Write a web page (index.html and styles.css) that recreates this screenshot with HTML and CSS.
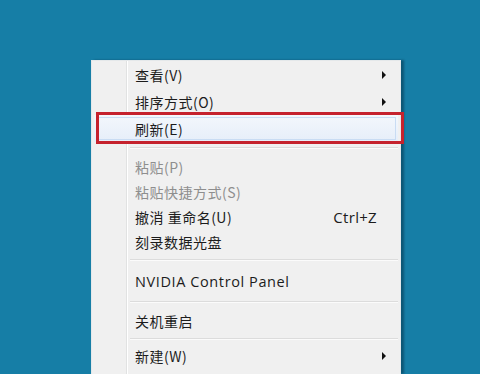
FILE: index.html
```html
<!DOCTYPE html>
<html lang="zh-CN">
<head>
<meta charset="utf-8">
<link rel="stylesheet" href="styles.css">
</head>
<body>
<div class="menu">
  <div class="item tall"><span class="label">查看(V)</span><span class="arrow"></span></div>
  <div class="item tall"><span class="label">排序方式(O)</span><span class="arrow"></span></div>
  <div class="item tall hot"><span class="label">刷新(E)</span><span class="mark"></span></div>
  <div class="sep"></div>
  <div class="item off"><span class="label">粘贴(P)</span></div>
  <div class="item off"><span class="label">粘贴快捷方式(S)</span></div>
  <div class="item"><span class="label">撤消 重命名(U)</span><span class="key">Ctrl+Z</span></div>
  <div class="item"><span class="label">刻录数据光盘</span></div>
  <div class="sep"></div>
  <div class="item wide"><span class="label latin">NVIDIA Control Panel</span></div>
  <div class="sep"></div>
  <div class="item mid"><span class="label">关机重启</span></div>
  <div class="sep narrow"></div>
  <div class="item"><span class="label">新建(W)</span><span class="arrow"></span></div>
</div>
</body>
</html>
```

FILE: styles.css
```css
html, body {
  margin: 0;
  height: 100%;
  overflow: hidden;
}
body {
  background: #167ea6;
  padding: 60px 0 0 91px;
  box-sizing: border-box;
  font-family: "Noto Sans CJK SC", "Noto Sans", sans-serif;
  font-size: 14px;
  letter-spacing: 0.5px;
  color: #1c1c1c;
}
.menu {
  position: relative;
  width: 310px;
  box-sizing: border-box;
  height: 314px;
  border: 1px solid #e4e8ea;
  border-bottom: 0;
  padding: 0 2px;
  background:
    linear-gradient(to right, transparent 34px, #e1e2e2 34px, #e1e2e2 35px, #ffffff 35px, #ffffff 36px, transparent 36px),
    #f0f0f0;
  box-shadow: 3px 0 2px rgba(0, 40, 60, 0.45);
}
.item {
  position: relative;
  display: flex;
  align-items: center;
  height: 25px;
  padding: 0 0 0 41px;
}
.item.tall {
  height: 27px;
}
.item.wide {
  height: 30px;
  padding-top: 3px;
  box-sizing: border-box;
}
.item.mid {
  height: 26px;
}
.label {
  flex: 1;
  line-height: 1;
}
.latin {
  font-family: "Open Sans", "Noto Sans", sans-serif;
  font-size: 14.5px;
  letter-spacing: 0.6px;
}
.off .label {
  color: #8e8e8e;
}
.key {
  font-family: "Open Sans", "Noto Sans", sans-serif;
  font-size: 15px;
  letter-spacing: 0.3px;
  margin-right: 21px;
}
.arrow {
  width: 0;
  height: 0;
  border-top: 4px solid transparent;
  border-bottom: 4px solid transparent;
  border-left: 4px solid #111;
  margin-right: 12px;
}
.hot {
  background: linear-gradient(#f3f7fc, #e6eef9);
  outline: 1px solid #c9dcf3;
  outline-offset: -3px;
}
.mark {
  position: absolute;
  left: 2px;
  right: -6px;
  top: -3px;
  bottom: -2px;
  border: 3px solid #c5222d;
  pointer-events: none;
}
.sep {
  height: 1px;
  margin: 5px 0 5px 36px;
  background: #dcdcdc;
  border-bottom: 1px solid #fbfbfb;
}
.sep.narrow {
  margin: 4px 0 3px 36px;
}
```
